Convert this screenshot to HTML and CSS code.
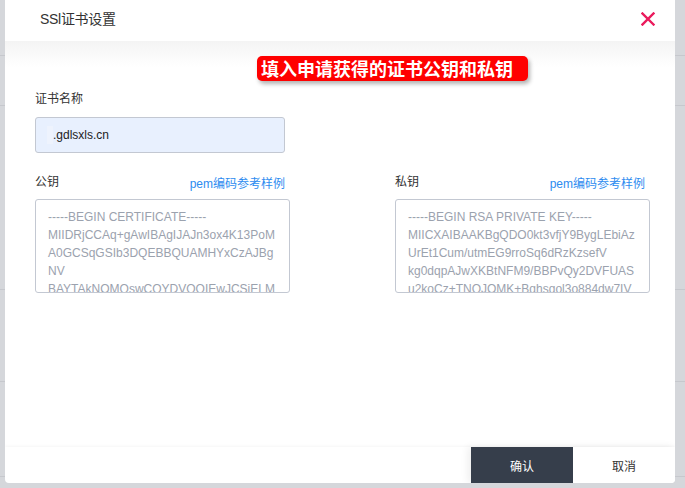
FILE: index.html
```html
<!DOCTYPE html>
<html lang="zh-CN">
<head>
<meta charset="utf-8">
<title>SSl证书设置</title>
<link rel="stylesheet" href="styles.css">
</head>
<body>
<div class="page-bg">
  <div class="bg-row r1"></div>
  <div class="bg-row r2"></div>
  <div class="bg-row r3"></div>
  <div class="bg-row r4"></div>
  <div class="bg-row r5"></div>
</div>

<div class="modal">
  <div class="modal-header">
    <span class="modal-title">SSl证书设置</span>
    <svg class="close" width="14" height="14" viewBox="0 0 14 14"><path d="M1.5 1.5 L12.5 12.5 M12.5 1.5 L1.5 12.5" stroke="#ea1a5c" stroke-width="2.4" stroke-linecap="square"/></svg>
  </div>
  <div class="modal-body">
    <div class="banner">填入申请获得的证书公钥和私钥</div>
    <div class="field">
      <div class="label">证书名称</div>
      <div class="input"><span class="redact"></span>.gdlsxls.cn</div>
    </div>
    <div class="keys">
      <div class="key-col">
        <div class="key-head"><span class="label">公钥</span><a class="link">pem编码参考样例</a></div>
        <div class="textarea">-----BEGIN CERTIFICATE-----
MIIDRjCCAq+gAwIBAgIJAJn3ox4K13PoM
A0GCSqGSIb3DQEBBQUAMHYxCzAJBg
NV
BAYTAkNOMQswCQYDVQQIEwJCSjELM</div>
      </div>
      <div class="key-col">
        <div class="key-head"><span class="label">私钥</span><a class="link">pem编码参考样例</a></div>
        <div class="textarea">-----BEGIN RSA PRIVATE KEY-----
MIICXAIBAAKBgQDO0kt3vfjY9BygLEbiAz
UrEt1Cum/utmEG9rroSq6dRzKzsefV
kg0dqpAJwXKBtNFM9/BBPvQy2DVFUAS
u2koCz+TNQJOMK+Bqhsqol3o884dw7IV</div>
      </div>
    </div>
  </div>
  <div class="modal-footer">
    <div class="btns">
      <button class="btn btn-ok">确认</button>
      <button class="btn btn-cancel">取消</button>
    </div>
  </div>
</div>
</body>
</html>
```
FILE: styles.css
```css
html, body {
  margin: 0;
  padding: 0;
}
body {
  width: 685px;
  height: 488px;
  overflow: hidden;
  background: #d5d7db;
  font-family: "Liberation Sans", Arial, "Noto Sans CJK SC", sans-serif;
  position: relative;
}
.page-bg {
  display: flex;
  flex-direction: column;
}
.bg-row {
  border-bottom: 1px solid #c6c8cd;
}
.r1 { height: 55px; }
.r2 { height: 49px; }
.r3 { height: 183px; }
.r4 { height: 91px; }
.r5 { height: 94px; }

.modal {
  position: absolute;
  left: 5px;
  top: 0;
  width: 670px;
  height: 483px;
  background: #fff;
  border-radius: 0 0 4px 4px;
  display: flex;
  flex-direction: column;
  overflow: hidden;
}
.modal-header {
  height: 41px;
  flex: none;
  display: flex;
  align-items: center;
  justify-content: space-between;
  padding: 0 20px 6px 35px;
  box-sizing: border-box;
}
.modal-title {
  font-size: 14px;
  color: #333;
  letter-spacing: -0.3px;
}
.close {
  display: block;
  margin-top: 2px;
}
.modal-body {
  flex: 1;
  background: linear-gradient(#f4f4f4 0, #ffffff 26px);
  padding: 15px 25px 0 30px;
}
.banner {
  margin-left: 222px;
  width: 271px;
  height: 25px;
  box-sizing: border-box;
  background: #ff0000;
  color: #fff;
  border-radius: 5px;
  font-family: "Noto Sans CJK SC", sans-serif;
  font-weight: 700;
  font-size: 18px;
  line-height: 25px;
  padding-left: 4px;
  white-space: nowrap;
  box-shadow: 2px 3px 4px rgba(0,0,0,0.3);
}
.label {
  font-size: 12px;
  color: #333;
  line-height: 16px;
}
.field {
  margin-top: 10px;
}
.field .label {
  margin-bottom: 10px;
}
.input {
  width: 250px;
  height: 36px;
  box-sizing: border-box;
  background: #e8f0fe;
  border: 1px solid #c3c8d2;
  border-radius: 3px;
  font-size: 12px;
  color: #222;
  line-height: 34px;
  padding-left: 11px;
  display: flex;
  align-items: center;
}
.redact {
  display: inline-block;
  width: 6px;
  height: 18px;
  background: #eef3fd;
}
.keys {
  display: grid;
  grid-template-columns: 255px 255px;
  column-gap: 105px;
  margin-top: 21px;
}
.key-head {
  display: flex;
  justify-content: space-between;
  align-items: center;
  padding-right: 5px;
  margin-bottom: 9px;
  height: 16px;
}
.link {
  font-size: 12px;
  color: #2d8cf0;
  text-decoration: none;
}
.textarea {
  height: 94px;
  box-sizing: border-box;
  border: 1px solid #c3c8d2;
  border-radius: 3px;
  padding: 8px 8px 0 12px;
  font-size: 12px;
  line-height: 18px;
  color: #9ba2ae;
  white-space: pre;
  overflow: hidden;
}
.modal-footer {
  margin-top: auto;
  height: 36px;
  flex: none;
  display: flex;
  justify-content: flex-end;
  box-shadow: 0 -1px 3px rgba(0,0,0,0.04);
}
.btns {
  display: flex;
  box-shadow: -3px 0 8px rgba(0,0,0,0.07);
}
.btn {
  width: 102px;
  height: 36px;
  border: none;
  margin: 0;
  padding: 0;
  font-family: "Liberation Sans", "Noto Sans CJK SC", sans-serif;
  font-size: 12px;
  cursor: pointer;
}
.btn-ok {
  background: #363e4b;
  color: #fff;
}
.btn-cancel {
  background: #fff;
  color: #333;
}
```
